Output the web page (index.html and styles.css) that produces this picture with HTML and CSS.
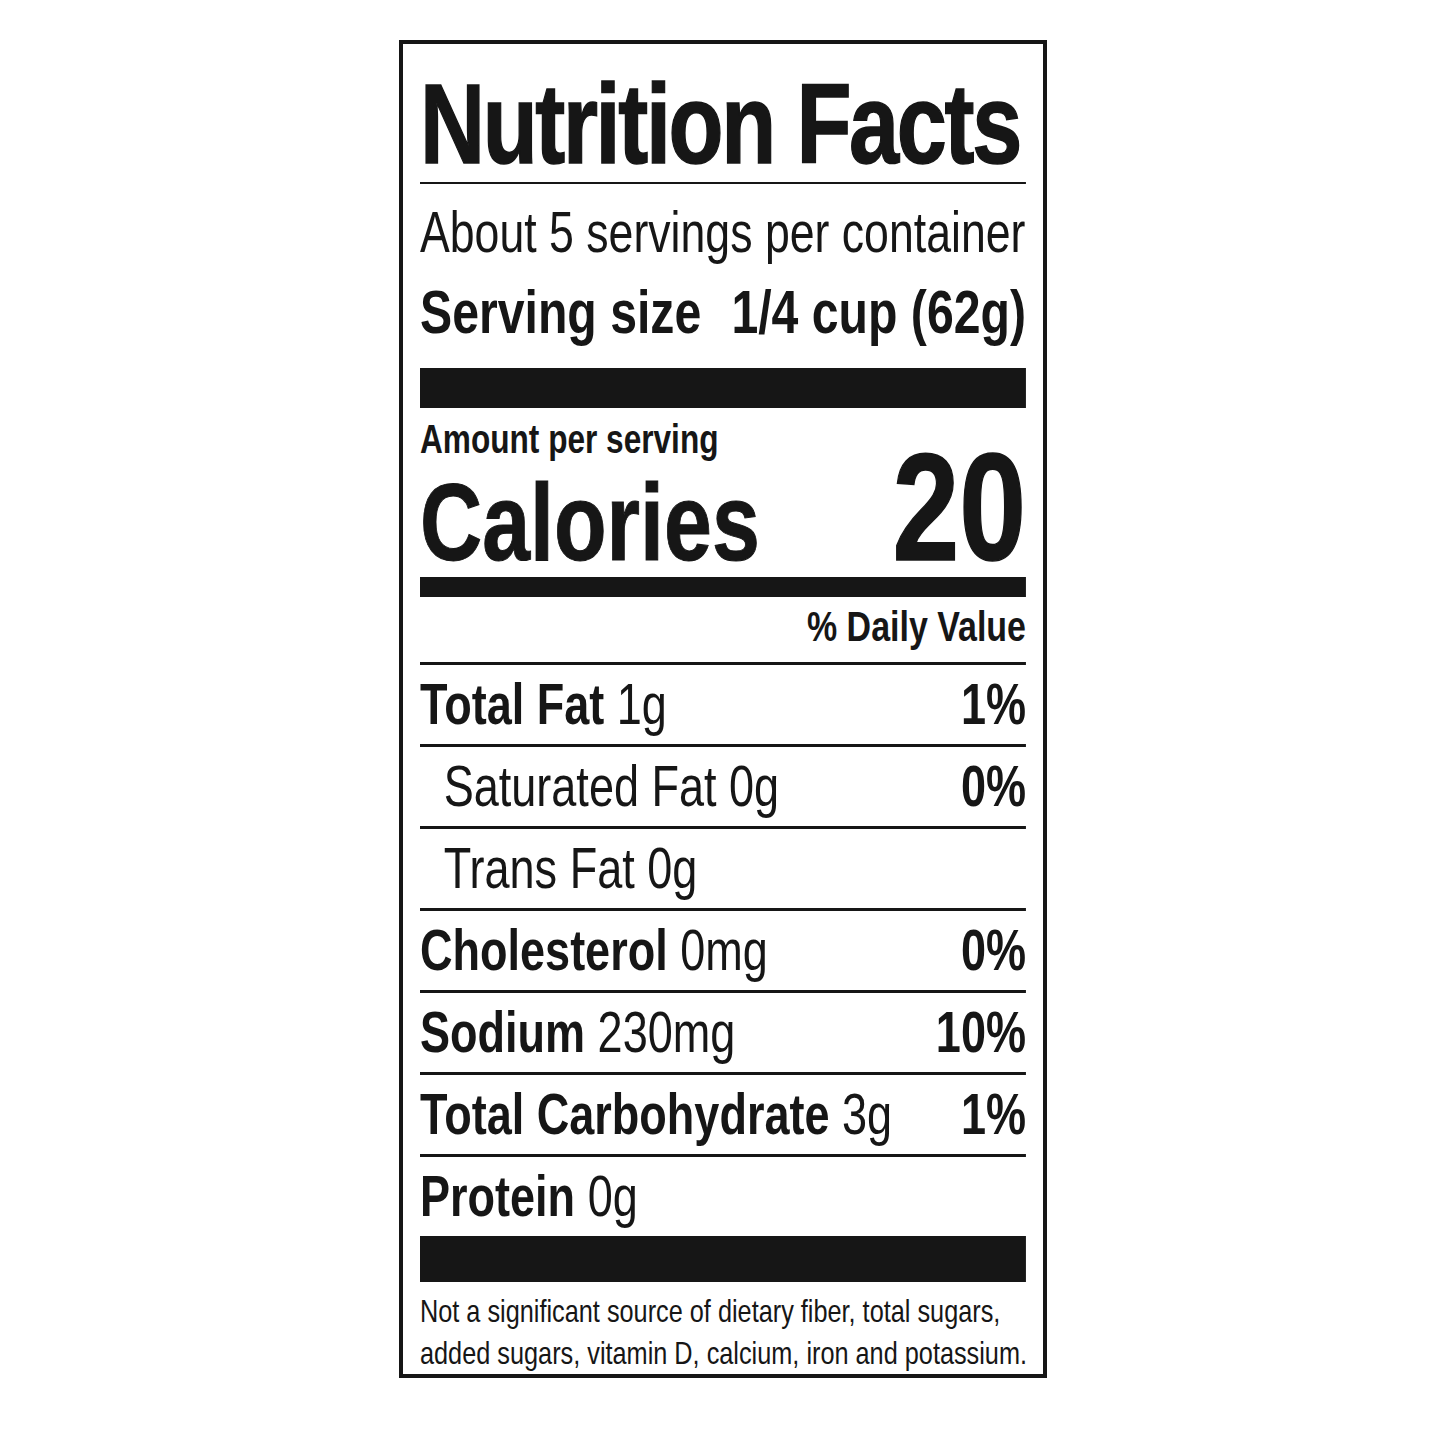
FILE: index.html
```html
<!DOCTYPE html>
<html lang="en">
<head>
<meta charset="utf-8">
<title>Nutrition Facts</title>
<link rel="stylesheet" href="styles.css">
</head>
<body>
<div class="label">
  <div class="inner">
    <h1 class="title">Nutrition Facts</h1>
    <div class="servings">About 5 servings per container</div>
    <div class="size"><span>Serving size</span><span>1/4 cup (62g)</span></div>
    <div class="bar bar-lg"></div>
    <div class="amount">Amount per serving</div>
    <div class="cal-row"><span class="cal">Calories</span><span class="cal-num">20</span></div>
    <div class="bar bar-md"></div>
    <div class="dv">% Daily Value</div>
    <div class="row"><span class="nut"><b>Total Fat</b> 1g</span><b class="pct">1%</b></div>
    <div class="row sub"><span class="nut">Saturated Fat 0g</span><b class="pct">0%</b></div>
    <div class="row sub"><span class="nut">Trans Fat 0g</span></div>
    <div class="row"><span class="nut"><b>Cholesterol</b> 0mg</span><b class="pct">0%</b></div>
    <div class="row"><span class="nut"><b>Sodium</b> 230mg</span><b class="pct">10%</b></div>
    <div class="row"><span class="nut"><b>Total Carbohydrate</b> 3g</span><b class="pct">1%</b></div>
    <div class="row"><span class="nut"><b>Protein</b> 0g</span></div>
    <div class="bar bar-xl"></div>
    <p class="foot">Not a significant source of dietary fiber, total sugars,<br>added sugars, vitamin D, calcium, iron and potassium.</p>
  </div>
</div>
</body>
</html>
```
FILE: styles.css
```css
* { box-sizing: border-box; }

body {
  margin: 0;
  background: #ffffff;
  color: #161616;
  font-family: "Liberation Sans", Arial, sans-serif;
}

.label {
  --sx: 0.79;
  width: 648px;
  margin: 40px 0 0 399px;
  border: 4px solid #161616;
  padding: 26px 17px 0;
}

.inner {
  width: calc(606px / var(--sx));
  transform: scaleX(var(--sx));
  transform-origin: 0 0;
  white-space: nowrap;
}

.title {
  margin: 0;
  font-size: 114px;
  letter-spacing: -3px;
  font-weight: 700;
  height: 114px;
  line-height: 107px;
  border-bottom: 2px solid #161616;
  -webkit-text-stroke: 1.5px #161616;
}

.servings {
  font-size: 56.5px;
  margin-top: 14px;
  height: 70px;
  line-height: 70px;
}

.size {
  display: flex;
  justify-content: space-between;
  font-weight: 700;
  font-size: 61px;
  margin-top: 9px;
  height: 70px;
  line-height: 70px;
}

.bar { background: #161616; }
.bar-lg { height: 40px; margin-top: 21px; }
.bar-md { height: 20px; }
.bar-xl { height: 46px; }

.amount {
  font-weight: 700;
  font-size: 40px;
  margin-top: 8px;
  height: 46px;
  line-height: 46px;
}

.cal-row {
  display: flex;
  justify-content: space-between;
  align-items: baseline;
  height: 115px;
  font-weight: 700;
}

.cal {
  font-size: 109px;
  line-height: 120px;
  -webkit-text-stroke: 1px #161616;
}

.cal-num {
  font-size: 152px;
  line-height: 90px;
  -webkit-text-stroke: 1.5px #161616;
}

.dv {
  text-align: right;
  font-weight: 700;
  font-size: 43px;
  height: 59px;
  line-height: 59px;
  margin-bottom: 6px;
}

.row {
  display: flex;
  justify-content: space-between;
  border-top: 3px solid #161616;
  height: 82px;
  line-height: 79px;
  font-size: 57px;
}

.row b, .pct { font-weight: 700; }
.sub .nut { padding-left: 30px; }

.foot {
  margin: 8px 0 0;
  font-size: 32px;
  line-height: 42px;
}
```
